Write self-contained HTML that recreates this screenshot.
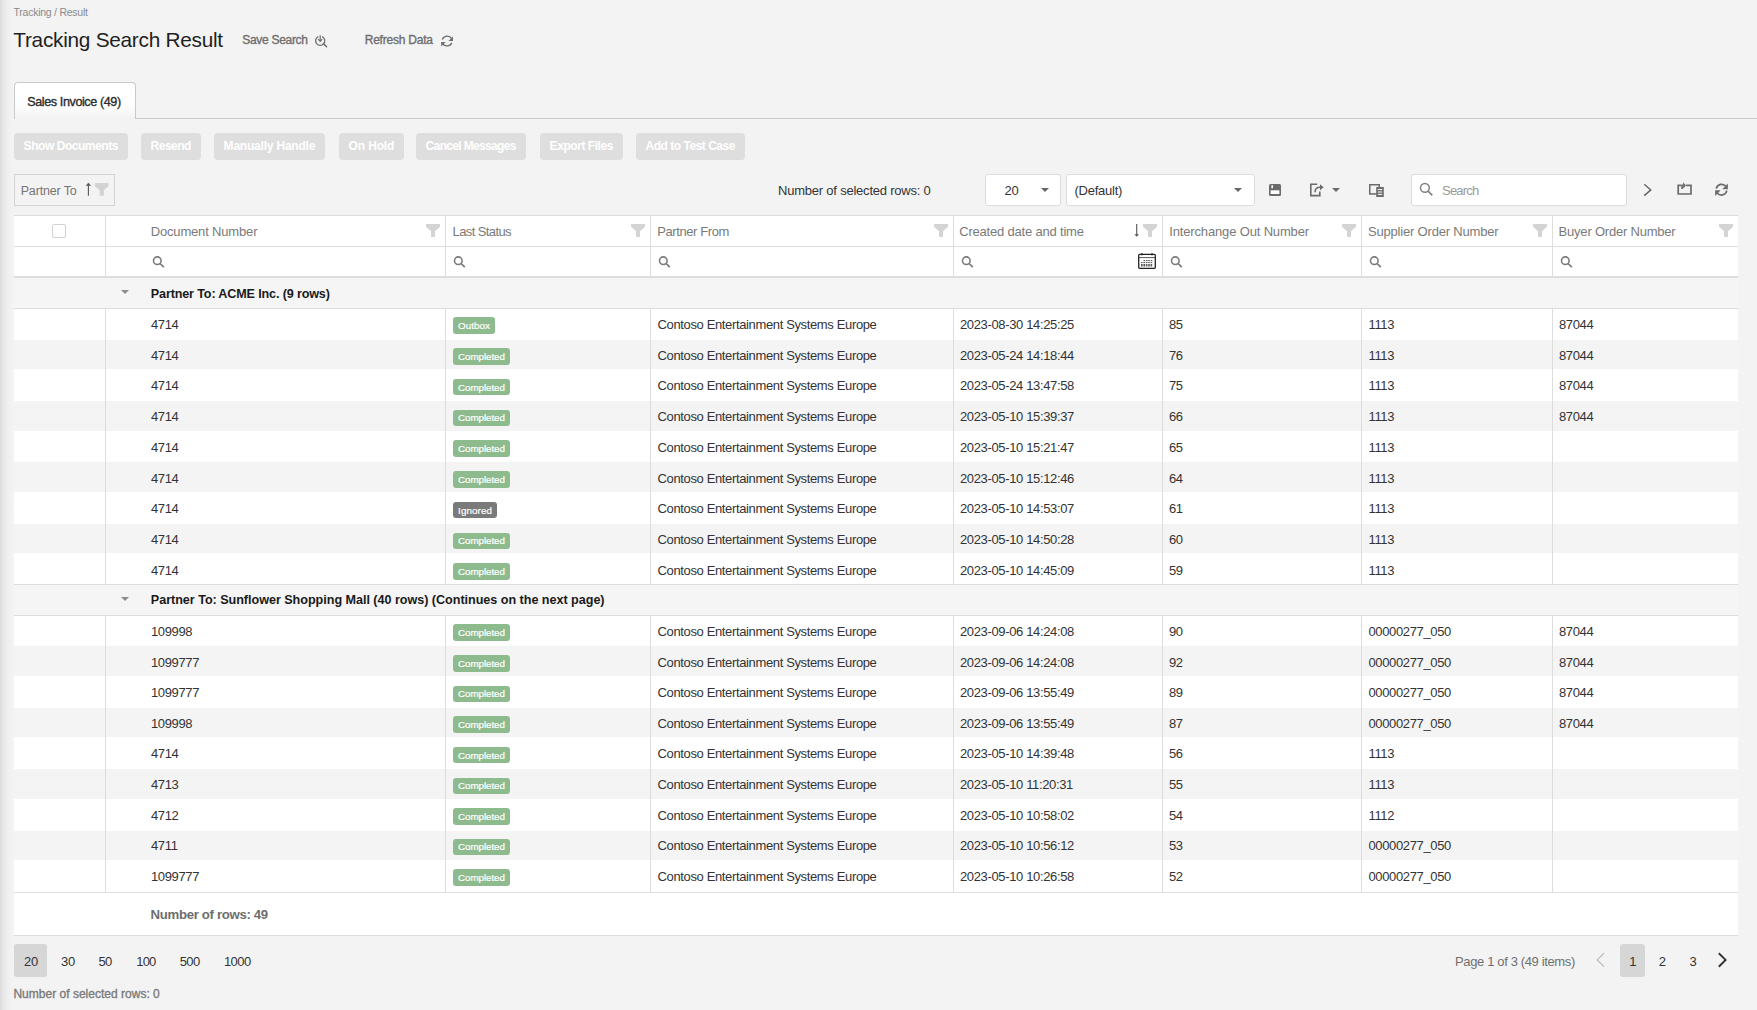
<!DOCTYPE html>
<html><head><meta charset="utf-8"><title>Tracking Search Result</title>
<style>
html,body{margin:0;padding:0;width:1757px;height:1010px;overflow:hidden;background:#f3f3f3;font-family:'Liberation Sans', sans-serif;}
.b{position:absolute;}
.t{position:absolute;white-space:nowrap;font-family:'Liberation Sans', sans-serif;}
</style></head><body>
<div class="b" style="left:0px;top:0px;width:14px;height:1010px;background:linear-gradient(to right,#dcdcdc 0px,#e6e6e6 3px,#eeeeee 7px,#f2f2f2 11px,#f3f3f3 14px)"></div>
<div class="t" style="left:13.60px;top:7.21px;font-size:10.5px;line-height:10.5px;font-weight:400;color:#8a8a8a;letter-spacing:-0.256px;">Tracking / Result</div>
<div class="t" style="left:13.30px;top:30.29px;font-size:20.8px;line-height:20.8px;font-weight:400;color:#1f1f1f;letter-spacing:-0.265px;">Tracking Search Result</div>
<div class="t" style="left:242.20px;top:33.64px;font-size:12px;line-height:12px;font-weight:400;color:#6e6e6e;-webkit-text-stroke:0.35px #6e6e6e;letter-spacing:-0.292px;">Save Search</div>
<div class="t" style="left:364.70px;top:33.64px;font-size:12px;line-height:12px;font-weight:400;color:#6e6e6e;-webkit-text-stroke:0.35px #6e6e6e;letter-spacing:-0.218px;">Refresh Data</div>
<svg class="b" style="left:313px;top:33px;" width="16" height="16" viewBox="0 0 16 16"><path d="M5.3 3.6A4.6 4.6 0 1 0 9.1 3.6" fill="none" stroke="#6e6e6e" stroke-width="1.3"/><path d="M7.2 2.2v5.8M5.1 6.2l2.1 2.1 2.1-2.1" fill="none" stroke="#6e6e6e" stroke-width="1.2"/><path d="M10.4 10.6l3.2 3.2" stroke="#6e6e6e" stroke-width="1.5" stroke-linecap="round"/></svg>
<svg class="b" style="left:440px;top:35px;" width="14" height="13" viewBox="0 0 14 13"><path d="M2.2 4.6A5.3 5.3 0 0 1 11.6 3.6" fill="none" stroke="#6e6e6e" stroke-width="1.3"/><path d="M13 1.4V6H8.5z" fill="#6e6e6e"/><path d="M11.8 7.9A5.3 5.3 0 0 1 2.6 8.6" fill="none" stroke="#6e6e6e" stroke-width="1.3"/><path d="M1.2 11.6V7h4.5z" fill="#6e6e6e"/></svg>
<div class="b" style="left:136px;top:118px;width:1621px;height:1px;background:#c9c9c9"></div>
<div class="b" style="left:14px;top:82px;width:122px;height:37px;background:linear-gradient(to bottom,#ffffff 0%,#ffffff 55%,#f3f3f3 100%);border:1px solid #c9c9c9;border-bottom:none;border-radius:4px 4px 0 0;box-sizing:border-box"></div>
<div class="t" style="left:27.30px;top:96.13px;font-size:12.6px;line-height:12.6px;font-weight:400;color:#2b2b2b;-webkit-text-stroke:0.35px #2b2b2b;letter-spacing:-0.413px;">Sales Invoice (49)</div>
<div class="b" style="left:14px;top:133px;width:114px;height:27px;background:#dedede;border-radius:4px"></div>
<div class="t" style="left:14.00px;top:140.14px;font-size:12px;line-height:12px;font-weight:700;color:#ffffff;letter-spacing:-0.453px;width:114px;text-align:center;text-indent:-0.453px;">Show Documents</div>
<div class="b" style="left:141px;top:133px;width:60px;height:27px;background:#dedede;border-radius:4px"></div>
<div class="t" style="left:141.00px;top:140.14px;font-size:12px;line-height:12px;font-weight:700;color:#ffffff;letter-spacing:-0.512px;width:60px;text-align:center;text-indent:-0.512px;">Resend</div>
<div class="b" style="left:214px;top:133px;width:111px;height:27px;background:#dedede;border-radius:4px"></div>
<div class="t" style="left:214.00px;top:140.14px;font-size:12px;line-height:12px;font-weight:700;color:#ffffff;letter-spacing:-0.206px;width:111px;text-align:center;text-indent:-0.206px;">Manually Handle</div>
<div class="b" style="left:339px;top:133px;width:65px;height:27px;background:#dedede;border-radius:4px"></div>
<div class="t" style="left:339.00px;top:140.14px;font-size:12px;line-height:12px;font-weight:700;color:#ffffff;letter-spacing:-0.145px;width:65px;text-align:center;text-indent:-0.145px;">On Hold</div>
<div class="b" style="left:416px;top:133px;width:110px;height:27px;background:#dedede;border-radius:4px"></div>
<div class="t" style="left:416.00px;top:140.14px;font-size:12px;line-height:12px;font-weight:700;color:#ffffff;letter-spacing:-0.662px;width:110px;text-align:center;text-indent:-0.662px;">Cancel Messages</div>
<div class="b" style="left:540px;top:133px;width:83px;height:27px;background:#dedede;border-radius:4px"></div>
<div class="t" style="left:540.00px;top:140.14px;font-size:12px;line-height:12px;font-weight:700;color:#ffffff;letter-spacing:-0.444px;width:83px;text-align:center;text-indent:-0.444px;">Export Files</div>
<div class="b" style="left:636px;top:133px;width:109px;height:27px;background:#dedede;border-radius:4px"></div>
<div class="t" style="left:636.00px;top:140.14px;font-size:12px;line-height:12px;font-weight:700;color:#ffffff;letter-spacing:-0.488px;width:109px;text-align:center;text-indent:-0.488px;">Add to Test Case</div>
<div class="b" style="left:14px;top:174px;width:101px;height:32px;border:1px solid #d3d3d3;box-sizing:border-box"></div>
<div class="t" style="left:20.70px;top:185.22px;font-size:12.5px;line-height:12.5px;font-weight:400;color:#757575;letter-spacing:-0.161px;">Partner To</div>
<svg class="b" style="left:84px;top:182px;" width="8" height="15" viewBox="0 0 8 15"><path d="M4.4 3.5V13.8" stroke="#555" stroke-width="1.1"/><path d="M1.7 3.8H7.1L4.4 0.8z" fill="#555"/></svg>
<svg class="b" style="left:94.5px;top:183px;" width="14" height="13" viewBox="0 0 14 13"><path d="M0 0H13.5V3.2L8.8 7.2V12.8H4.7V7.2L0 3.2z" fill="#d3d3d3"/></svg>
<div class="t" style="left:778.00px;top:184.39px;font-size:13px;line-height:13px;font-weight:400;color:#333;letter-spacing:-0.217px;">Number of selected rows: 0</div>
<div class="b" style="left:985px;top:174px;width:76px;height:32px;background:#fff;border:1px solid #dddddd;border-radius:3px;box-sizing:border-box"></div>
<div class="t" style="left:1004.50px;top:184.39px;font-size:13px;line-height:13px;font-weight:400;color:#333;letter-spacing:-0.269px;">20</div>
<svg class="b" style="left:1041px;top:188px;" width="8" height="5" viewBox="0 0 8 5"><path d="M0 0h8L4 4z" fill="#666"/></svg>
<div class="b" style="left:1066px;top:174px;width:189px;height:32px;background:#fff;border:1px solid #dddddd;border-radius:3px;box-sizing:border-box"></div>
<div class="t" style="left:1074.40px;top:184.39px;font-size:13px;line-height:13px;font-weight:400;color:#333;letter-spacing:-0.232px;">(Default)</div>
<svg class="b" style="left:1234px;top:188px;" width="8" height="5" viewBox="0 0 8 5"><path d="M0 0h8L4 4z" fill="#666"/></svg>
<svg class="b" style="left:1269px;top:184px;" width="12" height="12" viewBox="0 0 12 12"><rect x="0" y="0" width="12" height="12" rx="1.5" fill="#6b6b6b"/><rect x="2.4" y="1.2" width="1.6" height="3" fill="#fff"/><rect x="1.6" y="6.3" width="8.8" height="3.7" fill="#fff"/></svg>
<svg class="b" style="left:1310px;top:183px;" width="15" height="14" viewBox="0 0 15 14"><path d="M7.2 1.3H0.8V12.6H9.8V8.6" fill="none" stroke="#6b6b6b" stroke-width="1.6"/><path d="M5 9.2C5 6 6.8 4.2 10.2 4.2" fill="none" stroke="#6b6b6b" stroke-width="1.5"/><path d="M10 1.2L13.6 4.2L10 7.2z" fill="#6b6b6b"/></svg>
<svg class="b" style="left:1332px;top:187.6px;" width="8" height="5" viewBox="0 0 8 5"><path d="M0 0h8L4 4z" fill="#6b6b6b"/></svg>
<svg class="b" style="left:1369px;top:184px;" width="15" height="13" viewBox="0 0 15 13"><rect x="0.75" y="0.75" width="9.5" height="9.2" fill="none" stroke="#6b6b6b" stroke-width="1.5"/><rect x="7.2" y="3" width="7.6" height="10" fill="#6b6b6b"/><path d="M8.8 5.6h4.4M8.8 8h4.4M8.8 10.4h4.4" stroke="#fff" stroke-width="1"/></svg>
<div class="b" style="left:1411px;top:174px;width:216px;height:32px;background:#fff;border:1px solid #dddddd;border-radius:3px;box-sizing:border-box"></div>
<svg class="b" style="left:1419px;top:182px;" width="15" height="15" viewBox="0 0 15 15"><circle cx="5.9" cy="5.8" r="4.4" fill="none" stroke="#808080" stroke-width="1.5"/><path d="M9.1 9.1l4.2 4.3" stroke="#808080" stroke-width="1.6"/></svg>
<div class="t" style="left:1442.00px;top:183.99px;font-size:13px;line-height:13px;font-weight:400;color:#9a9a9a;letter-spacing:-0.781px;">Search</div>
<svg class="b" style="left:1642px;top:182px;" width="11" height="16" viewBox="0 0 11 16"><path d="M2.3 2.2L8.8 7.9 2.3 13.6" fill="none" stroke="#666" stroke-width="1.4"/></svg>
<svg class="b" style="left:1676px;top:181px;" width="17" height="15" viewBox="0 0 17 15"><path d="M5 4.4H2.2V13H15V4.4H10.2" fill="none" stroke="#6b6b6b" stroke-width="1.7"/><path d="M6.1 8V4.4H7.6" fill="none" stroke="#6b6b6b" stroke-width="1.7"/><path d="M7.2 1.2L10 4.4 7.2 7.6z" fill="#6b6b6b"/></svg>
<svg class="b" style="left:1714px;top:182px;" width="15" height="15" viewBox="0 0 15 15"><path d="M2.3 6.7A5.4 5.4 0 0 1 12 4.6" fill="none" stroke="#6b6b6b" stroke-width="1.7"/><path d="M13.9 1.6V7.2H8.3z" fill="#6b6b6b"/><path d="M12.8 8.6A5.4 5.4 0 0 1 3 10.6" fill="none" stroke="#6b6b6b" stroke-width="1.7"/><path d="M1.1 13.9V8.3H6.7z" fill="#6b6b6b"/></svg>
<div class="b" style="left:14px;top:215px;width:1724px;height:62px;background:#fff"></div>
<div class="b" style="left:14px;top:215px;width:1724px;height:1px;background:#dddddd"></div>
<div class="b" style="left:14px;top:246px;width:1724px;height:1px;background:#dddddd"></div>
<div class="b" style="left:14px;top:276px;width:1724px;height:2px;background:#dddddd"></div>
<div class="b" style="left:105px;top:216px;width:1px;height:60px;background:#dddddd"></div>
<div class="b" style="left:445px;top:216px;width:1px;height:60px;background:#dddddd"></div>
<div class="b" style="left:650px;top:216px;width:1px;height:60px;background:#dddddd"></div>
<div class="b" style="left:953px;top:216px;width:1px;height:60px;background:#dddddd"></div>
<div class="b" style="left:1162px;top:216px;width:1px;height:60px;background:#dddddd"></div>
<div class="b" style="left:1361px;top:216px;width:1px;height:60px;background:#dddddd"></div>
<div class="b" style="left:1552px;top:216px;width:1px;height:60px;background:#dddddd"></div>
<div class="b" style="left:52px;top:224px;width:14px;height:14px;background:#fff;border:1px solid #d2d2d2;border-radius:2px;box-sizing:border-box"></div>
<div class="t" style="left:150.70px;top:225.19px;font-size:13px;line-height:13px;font-weight:400;color:#7a7a7a;letter-spacing:-0.165px;">Document Number</div>
<svg class="b" style="left:426px;top:224px;" width="14" height="13" viewBox="0 0 14 13"><path d="M0 0H14V2.7L9 7.3V13H5V7.3L0 2.7z" fill="#d4d4d4"/></svg>
<svg class="b" style="left:152px;top:256px;" width="13" height="13" viewBox="0 0 13 13"><circle cx="5.3" cy="4.7" r="3.8" fill="none" stroke="#7a7a7a" stroke-width="1.55"/><path d="M8.1 7.5l3.7 3.7" stroke="#7a7a7a" stroke-width="1.7"/></svg>
<div class="t" style="left:452.50px;top:225.19px;font-size:13px;line-height:13px;font-weight:400;color:#7a7a7a;letter-spacing:-0.595px;">Last Status</div>
<svg class="b" style="left:631px;top:224px;" width="14" height="13" viewBox="0 0 14 13"><path d="M0 0H14V2.7L9 7.3V13H5V7.3L0 2.7z" fill="#d4d4d4"/></svg>
<svg class="b" style="left:453px;top:256px;" width="13" height="13" viewBox="0 0 13 13"><circle cx="5.3" cy="4.7" r="3.8" fill="none" stroke="#7a7a7a" stroke-width="1.55"/><path d="M8.1 7.5l3.7 3.7" stroke="#7a7a7a" stroke-width="1.7"/></svg>
<div class="t" style="left:657.20px;top:225.19px;font-size:13px;line-height:13px;font-weight:400;color:#7a7a7a;letter-spacing:-0.407px;">Partner From</div>
<svg class="b" style="left:934px;top:224px;" width="14" height="13" viewBox="0 0 14 13"><path d="M0 0H14V2.7L9 7.3V13H5V7.3L0 2.7z" fill="#d4d4d4"/></svg>
<svg class="b" style="left:658px;top:256px;" width="13" height="13" viewBox="0 0 13 13"><circle cx="5.3" cy="4.7" r="3.8" fill="none" stroke="#7a7a7a" stroke-width="1.55"/><path d="M8.1 7.5l3.7 3.7" stroke="#7a7a7a" stroke-width="1.7"/></svg>
<div class="t" style="left:959.20px;top:225.19px;font-size:13px;line-height:13px;font-weight:400;color:#7a7a7a;letter-spacing:-0.192px;">Created date and time</div>
<svg class="b" style="left:1143px;top:224px;" width="14" height="13" viewBox="0 0 14 13"><path d="M0 0H14V2.7L9 7.3V13H5V7.3L0 2.7z" fill="#d4d4d4"/></svg>
<svg class="b" style="left:961px;top:256px;" width="13" height="13" viewBox="0 0 13 13"><circle cx="5.3" cy="4.7" r="3.8" fill="none" stroke="#7a7a7a" stroke-width="1.55"/><path d="M8.1 7.5l3.7 3.7" stroke="#7a7a7a" stroke-width="1.7"/></svg>
<div class="t" style="left:1169.30px;top:225.19px;font-size:13px;line-height:13px;font-weight:400;color:#7a7a7a;letter-spacing:-0.156px;">Interchange Out Number</div>
<svg class="b" style="left:1342px;top:224px;" width="14" height="13" viewBox="0 0 14 13"><path d="M0 0H14V2.7L9 7.3V13H5V7.3L0 2.7z" fill="#d4d4d4"/></svg>
<svg class="b" style="left:1170px;top:256px;" width="13" height="13" viewBox="0 0 13 13"><circle cx="5.3" cy="4.7" r="3.8" fill="none" stroke="#7a7a7a" stroke-width="1.55"/><path d="M8.1 7.5l3.7 3.7" stroke="#7a7a7a" stroke-width="1.7"/></svg>
<div class="t" style="left:1367.90px;top:225.19px;font-size:13px;line-height:13px;font-weight:400;color:#7a7a7a;letter-spacing:-0.180px;">Supplier Order Number</div>
<svg class="b" style="left:1533px;top:224px;" width="14" height="13" viewBox="0 0 14 13"><path d="M0 0H14V2.7L9 7.3V13H5V7.3L0 2.7z" fill="#d4d4d4"/></svg>
<svg class="b" style="left:1369px;top:256px;" width="13" height="13" viewBox="0 0 13 13"><circle cx="5.3" cy="4.7" r="3.8" fill="none" stroke="#7a7a7a" stroke-width="1.55"/><path d="M8.1 7.5l3.7 3.7" stroke="#7a7a7a" stroke-width="1.7"/></svg>
<div class="t" style="left:1558.60px;top:225.19px;font-size:13px;line-height:13px;font-weight:400;color:#7a7a7a;letter-spacing:-0.209px;">Buyer Order Number</div>
<svg class="b" style="left:1719px;top:224px;" width="14" height="13" viewBox="0 0 14 13"><path d="M0 0H14V2.7L9 7.3V13H5V7.3L0 2.7z" fill="#d4d4d4"/></svg>
<svg class="b" style="left:1560px;top:256px;" width="13" height="13" viewBox="0 0 13 13"><circle cx="5.3" cy="4.7" r="3.8" fill="none" stroke="#7a7a7a" stroke-width="1.55"/><path d="M8.1 7.5l3.7 3.7" stroke="#7a7a7a" stroke-width="1.7"/></svg>
<svg class="b" style="left:1133px;top:223px;" width="8" height="15" viewBox="0 0 8 15"><path d="M3.7 1v11" stroke="#555" stroke-width="1.1"/><path d="M1.4 11.2H6L3.7 13.8z" fill="#555"/></svg>
<svg class="b" style="left:1138px;top:253px;" width="18" height="16" viewBox="0 0 18 16"><rect x="0.7" y="1.3" width="16.6" height="14" rx="1" fill="none" stroke="#222" stroke-width="1.3"/><path d="M1 4.6H17" stroke="#444" stroke-width="0.9"/><rect x="3.2" y="0.3" width="1.6" height="2" fill="#222"/><rect x="13.2" y="0.3" width="1.6" height="2" fill="#222"/><path d="M5.5 7.6H15" stroke="#333" stroke-width="0.9" stroke-dasharray="1.6 0.8"/><path d="M3 9.6H15" stroke="#333" stroke-width="0.9" stroke-dasharray="1.6 0.8"/><path d="M3 12.2H15" stroke="#555" stroke-width="2.4" stroke-dasharray="1.6 0.8"/></svg>
<div class="b" style="left:14px;top:278px;width:1724px;height:30px;background:#f5f5f5"></div>
<div class="b" style="left:14px;top:308px;width:1724px;height:1px;background:#dddddd"></div>
<svg class="b" style="left:121px;top:289.5px;" width="8" height="5" viewBox="0 0 8 5"><path d="M0 0h8L4 4z" fill="#8c8c8c"/></svg>
<div class="t" style="left:150.80px;top:288.33px;font-size:12.6px;line-height:12.6px;font-weight:700;color:#1a1a1a;letter-spacing:-0.146px;">Partner To: ACME Inc. (9 rows)</div>
<div class="b" style="left:14px;top:309px;width:1724px;height:275px;background:#fff"></div>
<div class="t" style="left:151.00px;top:317.99px;font-size:13px;line-height:13px;font-weight:400;color:#333;letter-spacing:-0.360px;">4714</div>
<div class="b" style="left:453px;top:317.40px;width:42px;height:16.6px;background:#8dbb8d;border-radius:3px"></div>
<div class="t" style="left:453.00px;top:321.10px;font-size:9.8px;line-height:9.8px;font-weight:400;color:#ffffff;letter-spacing:0.041px;width:42px;text-align:center;text-indent:0.041px;-webkit-text-stroke:0.2px #fff;">Outbox</div>
<div class="t" style="left:657.50px;top:317.99px;font-size:13px;line-height:13px;font-weight:400;color:#333;letter-spacing:-0.360px;">Contoso Entertainment Systems Europe</div>
<div class="t" style="left:960.00px;top:317.99px;font-size:13px;line-height:13px;font-weight:400;color:#333;letter-spacing:-0.360px;">2023-08-30 14:25:25</div>
<div class="t" style="left:1169.00px;top:317.99px;font-size:13px;line-height:13px;font-weight:400;color:#333;letter-spacing:-0.360px;">85</div>
<div class="t" style="left:1368.50px;top:317.99px;font-size:13px;line-height:13px;font-weight:400;color:#333;letter-spacing:-0.360px;">1113</div>
<div class="t" style="left:1559.00px;top:317.99px;font-size:13px;line-height:13px;font-weight:400;color:#333;letter-spacing:-0.360px;">87044</div>
<div class="b" style="left:14px;top:340px;width:1724px;height:29px;background:#f4f4f4"></div>
<div class="t" style="left:151.00px;top:348.74px;font-size:13px;line-height:13px;font-weight:400;color:#333;letter-spacing:-0.360px;">4714</div>
<div class="b" style="left:453px;top:348.15px;width:57px;height:16.6px;background:#8dbb8d;border-radius:3px"></div>
<div class="t" style="left:453.00px;top:351.85px;font-size:9.8px;line-height:9.8px;font-weight:400;color:#ffffff;letter-spacing:-0.074px;width:57px;text-align:center;text-indent:-0.074px;-webkit-text-stroke:0.2px #fff;">Completed</div>
<div class="t" style="left:657.50px;top:348.74px;font-size:13px;line-height:13px;font-weight:400;color:#333;letter-spacing:-0.360px;">Contoso Entertainment Systems Europe</div>
<div class="t" style="left:960.00px;top:348.74px;font-size:13px;line-height:13px;font-weight:400;color:#333;letter-spacing:-0.360px;">2023-05-24 14:18:44</div>
<div class="t" style="left:1169.00px;top:348.74px;font-size:13px;line-height:13px;font-weight:400;color:#333;letter-spacing:-0.360px;">76</div>
<div class="t" style="left:1368.50px;top:348.74px;font-size:13px;line-height:13px;font-weight:400;color:#333;letter-spacing:-0.360px;">1113</div>
<div class="t" style="left:1559.00px;top:348.74px;font-size:13px;line-height:13px;font-weight:400;color:#333;letter-spacing:-0.360px;">87044</div>
<div class="t" style="left:151.00px;top:379.49px;font-size:13px;line-height:13px;font-weight:400;color:#333;letter-spacing:-0.360px;">4714</div>
<div class="b" style="left:453px;top:378.90px;width:57px;height:16.6px;background:#8dbb8d;border-radius:3px"></div>
<div class="t" style="left:453.00px;top:382.60px;font-size:9.8px;line-height:9.8px;font-weight:400;color:#ffffff;letter-spacing:-0.074px;width:57px;text-align:center;text-indent:-0.074px;-webkit-text-stroke:0.2px #fff;">Completed</div>
<div class="t" style="left:657.50px;top:379.49px;font-size:13px;line-height:13px;font-weight:400;color:#333;letter-spacing:-0.360px;">Contoso Entertainment Systems Europe</div>
<div class="t" style="left:960.00px;top:379.49px;font-size:13px;line-height:13px;font-weight:400;color:#333;letter-spacing:-0.360px;">2023-05-24 13:47:58</div>
<div class="t" style="left:1169.00px;top:379.49px;font-size:13px;line-height:13px;font-weight:400;color:#333;letter-spacing:-0.360px;">75</div>
<div class="t" style="left:1368.50px;top:379.49px;font-size:13px;line-height:13px;font-weight:400;color:#333;letter-spacing:-0.360px;">1113</div>
<div class="t" style="left:1559.00px;top:379.49px;font-size:13px;line-height:13px;font-weight:400;color:#333;letter-spacing:-0.360px;">87044</div>
<div class="b" style="left:14px;top:401px;width:1724px;height:30px;background:#f4f4f4"></div>
<div class="t" style="left:151.00px;top:410.24px;font-size:13px;line-height:13px;font-weight:400;color:#333;letter-spacing:-0.360px;">4714</div>
<div class="b" style="left:453px;top:409.65px;width:57px;height:16.6px;background:#8dbb8d;border-radius:3px"></div>
<div class="t" style="left:453.00px;top:413.35px;font-size:9.8px;line-height:9.8px;font-weight:400;color:#ffffff;letter-spacing:-0.074px;width:57px;text-align:center;text-indent:-0.074px;-webkit-text-stroke:0.2px #fff;">Completed</div>
<div class="t" style="left:657.50px;top:410.24px;font-size:13px;line-height:13px;font-weight:400;color:#333;letter-spacing:-0.360px;">Contoso Entertainment Systems Europe</div>
<div class="t" style="left:960.00px;top:410.24px;font-size:13px;line-height:13px;font-weight:400;color:#333;letter-spacing:-0.360px;">2023-05-10 15:39:37</div>
<div class="t" style="left:1169.00px;top:410.24px;font-size:13px;line-height:13px;font-weight:400;color:#333;letter-spacing:-0.360px;">66</div>
<div class="t" style="left:1368.50px;top:410.24px;font-size:13px;line-height:13px;font-weight:400;color:#333;letter-spacing:-0.360px;">1113</div>
<div class="t" style="left:1559.00px;top:410.24px;font-size:13px;line-height:13px;font-weight:400;color:#333;letter-spacing:-0.360px;">87044</div>
<div class="t" style="left:151.00px;top:440.99px;font-size:13px;line-height:13px;font-weight:400;color:#333;letter-spacing:-0.360px;">4714</div>
<div class="b" style="left:453px;top:440.40px;width:57px;height:16.6px;background:#8dbb8d;border-radius:3px"></div>
<div class="t" style="left:453.00px;top:444.10px;font-size:9.8px;line-height:9.8px;font-weight:400;color:#ffffff;letter-spacing:-0.074px;width:57px;text-align:center;text-indent:-0.074px;-webkit-text-stroke:0.2px #fff;">Completed</div>
<div class="t" style="left:657.50px;top:440.99px;font-size:13px;line-height:13px;font-weight:400;color:#333;letter-spacing:-0.360px;">Contoso Entertainment Systems Europe</div>
<div class="t" style="left:960.00px;top:440.99px;font-size:13px;line-height:13px;font-weight:400;color:#333;letter-spacing:-0.360px;">2023-05-10 15:21:47</div>
<div class="t" style="left:1169.00px;top:440.99px;font-size:13px;line-height:13px;font-weight:400;color:#333;letter-spacing:-0.360px;">65</div>
<div class="t" style="left:1368.50px;top:440.99px;font-size:13px;line-height:13px;font-weight:400;color:#333;letter-spacing:-0.360px;">1113</div>
<div class="b" style="left:14px;top:462px;width:1724px;height:30px;background:#f4f4f4"></div>
<div class="t" style="left:151.00px;top:471.74px;font-size:13px;line-height:13px;font-weight:400;color:#333;letter-spacing:-0.360px;">4714</div>
<div class="b" style="left:453px;top:471.15px;width:57px;height:16.6px;background:#8dbb8d;border-radius:3px"></div>
<div class="t" style="left:453.00px;top:474.85px;font-size:9.8px;line-height:9.8px;font-weight:400;color:#ffffff;letter-spacing:-0.074px;width:57px;text-align:center;text-indent:-0.074px;-webkit-text-stroke:0.2px #fff;">Completed</div>
<div class="t" style="left:657.50px;top:471.74px;font-size:13px;line-height:13px;font-weight:400;color:#333;letter-spacing:-0.360px;">Contoso Entertainment Systems Europe</div>
<div class="t" style="left:960.00px;top:471.74px;font-size:13px;line-height:13px;font-weight:400;color:#333;letter-spacing:-0.360px;">2023-05-10 15:12:46</div>
<div class="t" style="left:1169.00px;top:471.74px;font-size:13px;line-height:13px;font-weight:400;color:#333;letter-spacing:-0.360px;">64</div>
<div class="t" style="left:1368.50px;top:471.74px;font-size:13px;line-height:13px;font-weight:400;color:#333;letter-spacing:-0.360px;">1113</div>
<div class="t" style="left:151.00px;top:502.49px;font-size:13px;line-height:13px;font-weight:400;color:#333;letter-spacing:-0.360px;">4714</div>
<div class="b" style="left:453px;top:501.90px;width:44px;height:16.6px;background:#7a7a7a;border-radius:3px"></div>
<div class="t" style="left:453.00px;top:505.60px;font-size:9.8px;line-height:9.8px;font-weight:400;color:#ffffff;letter-spacing:0.094px;width:44px;text-align:center;text-indent:0.094px;-webkit-text-stroke:0.2px #fff;">Ignored</div>
<div class="t" style="left:657.50px;top:502.49px;font-size:13px;line-height:13px;font-weight:400;color:#333;letter-spacing:-0.360px;">Contoso Entertainment Systems Europe</div>
<div class="t" style="left:960.00px;top:502.49px;font-size:13px;line-height:13px;font-weight:400;color:#333;letter-spacing:-0.360px;">2023-05-10 14:53:07</div>
<div class="t" style="left:1169.00px;top:502.49px;font-size:13px;line-height:13px;font-weight:400;color:#333;letter-spacing:-0.360px;">61</div>
<div class="t" style="left:1368.50px;top:502.49px;font-size:13px;line-height:13px;font-weight:400;color:#333;letter-spacing:-0.360px;">1113</div>
<div class="b" style="left:14px;top:524px;width:1724px;height:29px;background:#f4f4f4"></div>
<div class="t" style="left:151.00px;top:533.24px;font-size:13px;line-height:13px;font-weight:400;color:#333;letter-spacing:-0.360px;">4714</div>
<div class="b" style="left:453px;top:532.65px;width:57px;height:16.6px;background:#8dbb8d;border-radius:3px"></div>
<div class="t" style="left:453.00px;top:536.35px;font-size:9.8px;line-height:9.8px;font-weight:400;color:#ffffff;letter-spacing:-0.074px;width:57px;text-align:center;text-indent:-0.074px;-webkit-text-stroke:0.2px #fff;">Completed</div>
<div class="t" style="left:657.50px;top:533.24px;font-size:13px;line-height:13px;font-weight:400;color:#333;letter-spacing:-0.360px;">Contoso Entertainment Systems Europe</div>
<div class="t" style="left:960.00px;top:533.24px;font-size:13px;line-height:13px;font-weight:400;color:#333;letter-spacing:-0.360px;">2023-05-10 14:50:28</div>
<div class="t" style="left:1169.00px;top:533.24px;font-size:13px;line-height:13px;font-weight:400;color:#333;letter-spacing:-0.360px;">60</div>
<div class="t" style="left:1368.50px;top:533.24px;font-size:13px;line-height:13px;font-weight:400;color:#333;letter-spacing:-0.360px;">1113</div>
<div class="t" style="left:151.00px;top:563.99px;font-size:13px;line-height:13px;font-weight:400;color:#333;letter-spacing:-0.360px;">4714</div>
<div class="b" style="left:453px;top:563.40px;width:57px;height:16.6px;background:#8dbb8d;border-radius:3px"></div>
<div class="t" style="left:453.00px;top:567.10px;font-size:9.8px;line-height:9.8px;font-weight:400;color:#ffffff;letter-spacing:-0.074px;width:57px;text-align:center;text-indent:-0.074px;-webkit-text-stroke:0.2px #fff;">Completed</div>
<div class="t" style="left:657.50px;top:563.99px;font-size:13px;line-height:13px;font-weight:400;color:#333;letter-spacing:-0.360px;">Contoso Entertainment Systems Europe</div>
<div class="t" style="left:960.00px;top:563.99px;font-size:13px;line-height:13px;font-weight:400;color:#333;letter-spacing:-0.360px;">2023-05-10 14:45:09</div>
<div class="t" style="left:1169.00px;top:563.99px;font-size:13px;line-height:13px;font-weight:400;color:#333;letter-spacing:-0.360px;">59</div>
<div class="t" style="left:1368.50px;top:563.99px;font-size:13px;line-height:13px;font-weight:400;color:#333;letter-spacing:-0.360px;">1113</div>
<div class="b" style="left:105px;top:309px;width:1px;height:275px;background:#dddddd"></div>
<div class="b" style="left:445px;top:309px;width:1px;height:275px;background:#dddddd"></div>
<div class="b" style="left:650px;top:309px;width:1px;height:275px;background:#dddddd"></div>
<div class="b" style="left:953px;top:309px;width:1px;height:275px;background:#dddddd"></div>
<div class="b" style="left:1162px;top:309px;width:1px;height:275px;background:#dddddd"></div>
<div class="b" style="left:1361px;top:309px;width:1px;height:275px;background:#dddddd"></div>
<div class="b" style="left:1552px;top:309px;width:1px;height:275px;background:#dddddd"></div>
<div class="b" style="left:14px;top:584px;width:1724px;height:1px;background:#dddddd"></div>
<div class="b" style="left:14px;top:585px;width:1724px;height:30px;background:#f5f5f5"></div>
<div class="b" style="left:14px;top:615px;width:1724px;height:1px;background:#dddddd"></div>
<svg class="b" style="left:121px;top:596.5px;" width="8" height="5" viewBox="0 0 8 5"><path d="M0 0h8L4 4z" fill="#8c8c8c"/></svg>
<div class="t" style="left:150.80px;top:594.33px;font-size:12.6px;line-height:12.6px;font-weight:700;color:#1a1a1a;letter-spacing:-0.030px;">Partner To: Sunflower Shopping Mall (40 rows) (Continues on the next page)</div>
<div class="b" style="left:14px;top:616px;width:1724px;height:276px;background:#fff"></div>
<div class="t" style="left:151.00px;top:624.99px;font-size:13px;line-height:13px;font-weight:400;color:#333;letter-spacing:-0.360px;">109998</div>
<div class="b" style="left:453px;top:624.40px;width:57px;height:16.6px;background:#8dbb8d;border-radius:3px"></div>
<div class="t" style="left:453.00px;top:628.10px;font-size:9.8px;line-height:9.8px;font-weight:400;color:#ffffff;letter-spacing:-0.074px;width:57px;text-align:center;text-indent:-0.074px;-webkit-text-stroke:0.2px #fff;">Completed</div>
<div class="t" style="left:657.50px;top:624.99px;font-size:13px;line-height:13px;font-weight:400;color:#333;letter-spacing:-0.360px;">Contoso Entertainment Systems Europe</div>
<div class="t" style="left:960.00px;top:624.99px;font-size:13px;line-height:13px;font-weight:400;color:#333;letter-spacing:-0.360px;">2023-09-06 14:24:08</div>
<div class="t" style="left:1169.00px;top:624.99px;font-size:13px;line-height:13px;font-weight:400;color:#333;letter-spacing:-0.360px;">90</div>
<div class="t" style="left:1368.50px;top:624.99px;font-size:13px;line-height:13px;font-weight:400;color:#333;letter-spacing:-0.360px;">00000277_050</div>
<div class="t" style="left:1559.00px;top:624.99px;font-size:13px;line-height:13px;font-weight:400;color:#333;letter-spacing:-0.360px;">87044</div>
<div class="b" style="left:14px;top:646px;width:1724px;height:30px;background:#f4f4f4"></div>
<div class="t" style="left:151.00px;top:655.62px;font-size:13px;line-height:13px;font-weight:400;color:#333;letter-spacing:-0.360px;">1099777</div>
<div class="b" style="left:453px;top:655.02px;width:57px;height:16.6px;background:#8dbb8d;border-radius:3px"></div>
<div class="t" style="left:453.00px;top:658.73px;font-size:9.8px;line-height:9.8px;font-weight:400;color:#ffffff;letter-spacing:-0.074px;width:57px;text-align:center;text-indent:-0.074px;-webkit-text-stroke:0.2px #fff;">Completed</div>
<div class="t" style="left:657.50px;top:655.62px;font-size:13px;line-height:13px;font-weight:400;color:#333;letter-spacing:-0.360px;">Contoso Entertainment Systems Europe</div>
<div class="t" style="left:960.00px;top:655.62px;font-size:13px;line-height:13px;font-weight:400;color:#333;letter-spacing:-0.360px;">2023-09-06 14:24:08</div>
<div class="t" style="left:1169.00px;top:655.62px;font-size:13px;line-height:13px;font-weight:400;color:#333;letter-spacing:-0.360px;">92</div>
<div class="t" style="left:1368.50px;top:655.62px;font-size:13px;line-height:13px;font-weight:400;color:#333;letter-spacing:-0.360px;">00000277_050</div>
<div class="t" style="left:1559.00px;top:655.62px;font-size:13px;line-height:13px;font-weight:400;color:#333;letter-spacing:-0.360px;">87044</div>
<div class="t" style="left:151.00px;top:686.24px;font-size:13px;line-height:13px;font-weight:400;color:#333;letter-spacing:-0.360px;">1099777</div>
<div class="b" style="left:453px;top:685.65px;width:57px;height:16.6px;background:#8dbb8d;border-radius:3px"></div>
<div class="t" style="left:453.00px;top:689.35px;font-size:9.8px;line-height:9.8px;font-weight:400;color:#ffffff;letter-spacing:-0.074px;width:57px;text-align:center;text-indent:-0.074px;-webkit-text-stroke:0.2px #fff;">Completed</div>
<div class="t" style="left:657.50px;top:686.24px;font-size:13px;line-height:13px;font-weight:400;color:#333;letter-spacing:-0.360px;">Contoso Entertainment Systems Europe</div>
<div class="t" style="left:960.00px;top:686.24px;font-size:13px;line-height:13px;font-weight:400;color:#333;letter-spacing:-0.360px;">2023-09-06 13:55:49</div>
<div class="t" style="left:1169.00px;top:686.24px;font-size:13px;line-height:13px;font-weight:400;color:#333;letter-spacing:-0.360px;">89</div>
<div class="t" style="left:1368.50px;top:686.24px;font-size:13px;line-height:13px;font-weight:400;color:#333;letter-spacing:-0.360px;">00000277_050</div>
<div class="t" style="left:1559.00px;top:686.24px;font-size:13px;line-height:13px;font-weight:400;color:#333;letter-spacing:-0.360px;">87044</div>
<div class="b" style="left:14px;top:708px;width:1724px;height:29px;background:#f4f4f4"></div>
<div class="t" style="left:151.00px;top:716.87px;font-size:13px;line-height:13px;font-weight:400;color:#333;letter-spacing:-0.360px;">109998</div>
<div class="b" style="left:453px;top:716.27px;width:57px;height:16.6px;background:#8dbb8d;border-radius:3px"></div>
<div class="t" style="left:453.00px;top:719.98px;font-size:9.8px;line-height:9.8px;font-weight:400;color:#ffffff;letter-spacing:-0.074px;width:57px;text-align:center;text-indent:-0.074px;-webkit-text-stroke:0.2px #fff;">Completed</div>
<div class="t" style="left:657.50px;top:716.87px;font-size:13px;line-height:13px;font-weight:400;color:#333;letter-spacing:-0.360px;">Contoso Entertainment Systems Europe</div>
<div class="t" style="left:960.00px;top:716.87px;font-size:13px;line-height:13px;font-weight:400;color:#333;letter-spacing:-0.360px;">2023-09-06 13:55:49</div>
<div class="t" style="left:1169.00px;top:716.87px;font-size:13px;line-height:13px;font-weight:400;color:#333;letter-spacing:-0.360px;">87</div>
<div class="t" style="left:1368.50px;top:716.87px;font-size:13px;line-height:13px;font-weight:400;color:#333;letter-spacing:-0.360px;">00000277_050</div>
<div class="t" style="left:1559.00px;top:716.87px;font-size:13px;line-height:13px;font-weight:400;color:#333;letter-spacing:-0.360px;">87044</div>
<div class="t" style="left:151.00px;top:747.49px;font-size:13px;line-height:13px;font-weight:400;color:#333;letter-spacing:-0.360px;">4714</div>
<div class="b" style="left:453px;top:746.90px;width:57px;height:16.6px;background:#8dbb8d;border-radius:3px"></div>
<div class="t" style="left:453.00px;top:750.60px;font-size:9.8px;line-height:9.8px;font-weight:400;color:#ffffff;letter-spacing:-0.074px;width:57px;text-align:center;text-indent:-0.074px;-webkit-text-stroke:0.2px #fff;">Completed</div>
<div class="t" style="left:657.50px;top:747.49px;font-size:13px;line-height:13px;font-weight:400;color:#333;letter-spacing:-0.360px;">Contoso Entertainment Systems Europe</div>
<div class="t" style="left:960.00px;top:747.49px;font-size:13px;line-height:13px;font-weight:400;color:#333;letter-spacing:-0.360px;">2023-05-10 14:39:48</div>
<div class="t" style="left:1169.00px;top:747.49px;font-size:13px;line-height:13px;font-weight:400;color:#333;letter-spacing:-0.360px;">56</div>
<div class="t" style="left:1368.50px;top:747.49px;font-size:13px;line-height:13px;font-weight:400;color:#333;letter-spacing:-0.360px;">1113</div>
<div class="b" style="left:14px;top:769px;width:1724px;height:30px;background:#f4f4f4"></div>
<div class="t" style="left:151.00px;top:778.12px;font-size:13px;line-height:13px;font-weight:400;color:#333;letter-spacing:-0.360px;">4713</div>
<div class="b" style="left:453px;top:777.52px;width:57px;height:16.6px;background:#8dbb8d;border-radius:3px"></div>
<div class="t" style="left:453.00px;top:781.23px;font-size:9.8px;line-height:9.8px;font-weight:400;color:#ffffff;letter-spacing:-0.074px;width:57px;text-align:center;text-indent:-0.074px;-webkit-text-stroke:0.2px #fff;">Completed</div>
<div class="t" style="left:657.50px;top:778.12px;font-size:13px;line-height:13px;font-weight:400;color:#333;letter-spacing:-0.360px;">Contoso Entertainment Systems Europe</div>
<div class="t" style="left:960.00px;top:778.12px;font-size:13px;line-height:13px;font-weight:400;color:#333;letter-spacing:-0.360px;">2023-05-10 11:20:31</div>
<div class="t" style="left:1169.00px;top:778.12px;font-size:13px;line-height:13px;font-weight:400;color:#333;letter-spacing:-0.360px;">55</div>
<div class="t" style="left:1368.50px;top:778.12px;font-size:13px;line-height:13px;font-weight:400;color:#333;letter-spacing:-0.360px;">1113</div>
<div class="t" style="left:151.00px;top:808.74px;font-size:13px;line-height:13px;font-weight:400;color:#333;letter-spacing:-0.360px;">4712</div>
<div class="b" style="left:453px;top:808.15px;width:57px;height:16.6px;background:#8dbb8d;border-radius:3px"></div>
<div class="t" style="left:453.00px;top:811.85px;font-size:9.8px;line-height:9.8px;font-weight:400;color:#ffffff;letter-spacing:-0.074px;width:57px;text-align:center;text-indent:-0.074px;-webkit-text-stroke:0.2px #fff;">Completed</div>
<div class="t" style="left:657.50px;top:808.74px;font-size:13px;line-height:13px;font-weight:400;color:#333;letter-spacing:-0.360px;">Contoso Entertainment Systems Europe</div>
<div class="t" style="left:960.00px;top:808.74px;font-size:13px;line-height:13px;font-weight:400;color:#333;letter-spacing:-0.360px;">2023-05-10 10:58:02</div>
<div class="t" style="left:1169.00px;top:808.74px;font-size:13px;line-height:13px;font-weight:400;color:#333;letter-spacing:-0.360px;">54</div>
<div class="t" style="left:1368.50px;top:808.74px;font-size:13px;line-height:13px;font-weight:400;color:#333;letter-spacing:-0.360px;">1112</div>
<div class="b" style="left:14px;top:831px;width:1724px;height:29px;background:#f4f4f4"></div>
<div class="t" style="left:151.00px;top:839.37px;font-size:13px;line-height:13px;font-weight:400;color:#333;letter-spacing:-0.360px;">4711</div>
<div class="b" style="left:453px;top:838.77px;width:57px;height:16.6px;background:#8dbb8d;border-radius:3px"></div>
<div class="t" style="left:453.00px;top:842.48px;font-size:9.8px;line-height:9.8px;font-weight:400;color:#ffffff;letter-spacing:-0.074px;width:57px;text-align:center;text-indent:-0.074px;-webkit-text-stroke:0.2px #fff;">Completed</div>
<div class="t" style="left:657.50px;top:839.37px;font-size:13px;line-height:13px;font-weight:400;color:#333;letter-spacing:-0.360px;">Contoso Entertainment Systems Europe</div>
<div class="t" style="left:960.00px;top:839.37px;font-size:13px;line-height:13px;font-weight:400;color:#333;letter-spacing:-0.360px;">2023-05-10 10:56:12</div>
<div class="t" style="left:1169.00px;top:839.37px;font-size:13px;line-height:13px;font-weight:400;color:#333;letter-spacing:-0.360px;">53</div>
<div class="t" style="left:1368.50px;top:839.37px;font-size:13px;line-height:13px;font-weight:400;color:#333;letter-spacing:-0.360px;">00000277_050</div>
<div class="t" style="left:151.00px;top:869.99px;font-size:13px;line-height:13px;font-weight:400;color:#333;letter-spacing:-0.360px;">1099777</div>
<div class="b" style="left:453px;top:869.40px;width:57px;height:16.6px;background:#8dbb8d;border-radius:3px"></div>
<div class="t" style="left:453.00px;top:873.10px;font-size:9.8px;line-height:9.8px;font-weight:400;color:#ffffff;letter-spacing:-0.074px;width:57px;text-align:center;text-indent:-0.074px;-webkit-text-stroke:0.2px #fff;">Completed</div>
<div class="t" style="left:657.50px;top:869.99px;font-size:13px;line-height:13px;font-weight:400;color:#333;letter-spacing:-0.360px;">Contoso Entertainment Systems Europe</div>
<div class="t" style="left:960.00px;top:869.99px;font-size:13px;line-height:13px;font-weight:400;color:#333;letter-spacing:-0.360px;">2023-05-10 10:26:58</div>
<div class="t" style="left:1169.00px;top:869.99px;font-size:13px;line-height:13px;font-weight:400;color:#333;letter-spacing:-0.360px;">52</div>
<div class="t" style="left:1368.50px;top:869.99px;font-size:13px;line-height:13px;font-weight:400;color:#333;letter-spacing:-0.360px;">00000277_050</div>
<div class="b" style="left:105px;top:616px;width:1px;height:276px;background:#dddddd"></div>
<div class="b" style="left:445px;top:616px;width:1px;height:276px;background:#dddddd"></div>
<div class="b" style="left:650px;top:616px;width:1px;height:276px;background:#dddddd"></div>
<div class="b" style="left:953px;top:616px;width:1px;height:276px;background:#dddddd"></div>
<div class="b" style="left:1162px;top:616px;width:1px;height:276px;background:#dddddd"></div>
<div class="b" style="left:1361px;top:616px;width:1px;height:276px;background:#dddddd"></div>
<div class="b" style="left:1552px;top:616px;width:1px;height:276px;background:#dddddd"></div>
<div class="b" style="left:14px;top:892px;width:1724px;height:1px;background:#dddddd"></div>
<div class="b" style="left:14px;top:893px;width:1724px;height:42px;background:#fff"></div>
<div class="b" style="left:14px;top:935px;width:1724px;height:1px;background:#dddddd"></div>
<div class="t" style="left:150.60px;top:907.72px;font-size:13.2px;line-height:13.2px;font-weight:700;color:#6e6e6e;letter-spacing:-0.324px;">Number of rows: 49</div>
<div class="b" style="left:14px;top:944px;width:33px;height:33px;background:#d6d6d6;border-radius:3px"></div>
<div class="t" style="left:24.10px;top:954.99px;font-size:13px;line-height:13px;font-weight:400;color:#333;letter-spacing:-0.369px;">20</div>
<div class="t" style="left:61.10px;top:954.99px;font-size:13px;line-height:13px;font-weight:400;color:#333;letter-spacing:-0.369px;">30</div>
<div class="t" style="left:98.50px;top:954.99px;font-size:13px;line-height:13px;font-weight:400;color:#333;letter-spacing:-0.769px;">50</div>
<div class="t" style="left:136.30px;top:954.99px;font-size:13px;line-height:13px;font-weight:400;color:#333;letter-spacing:-0.852px;">100</div>
<div class="t" style="left:179.80px;top:954.99px;font-size:13px;line-height:13px;font-weight:400;color:#333;letter-spacing:-0.652px;">500</div>
<div class="t" style="left:223.90px;top:954.99px;font-size:13px;line-height:13px;font-weight:400;color:#333;letter-spacing:-0.507px;">1000</div>
<div class="t" style="left:1455.00px;top:954.99px;font-size:13px;line-height:13px;font-weight:400;color:#707070;letter-spacing:-0.362px;">Page 1 of 3 (49 items)</div>
<svg class="b" style="left:1595px;top:952px;" width="11" height="16" viewBox="0 0 11 16"><path d="M9 1.2L2.2 7.9 9 14.6" fill="none" stroke="#bdbdbd" stroke-width="1.3"/></svg>
<div class="b" style="left:1620px;top:944px;width:25px;height:33px;background:#d6d6d6;border-radius:3px"></div>
<div class="t" style="left:1629.30px;top:954.99px;font-size:13px;line-height:13px;font-weight:400;color:#333;">1</div>
<div class="t" style="left:1658.70px;top:954.99px;font-size:13px;line-height:13px;font-weight:400;color:#333;">2</div>
<div class="t" style="left:1689.40px;top:954.99px;font-size:13px;line-height:13px;font-weight:400;color:#333;">3</div>
<svg class="b" style="left:1717px;top:952px;" width="11" height="16" viewBox="0 0 11 16"><path d="M1.8 1.2L8.6 7.9 1.8 14.8" fill="none" stroke="#333" stroke-width="1.95"/></svg>
<div class="t" style="left:13.40px;top:987.54px;font-size:12px;line-height:12px;font-weight:400;color:#7a7a7a;-webkit-text-stroke:0.35px #7a7a7a;letter-spacing:0.013px;">Number of selected rows: 0</div>
</body></html>
